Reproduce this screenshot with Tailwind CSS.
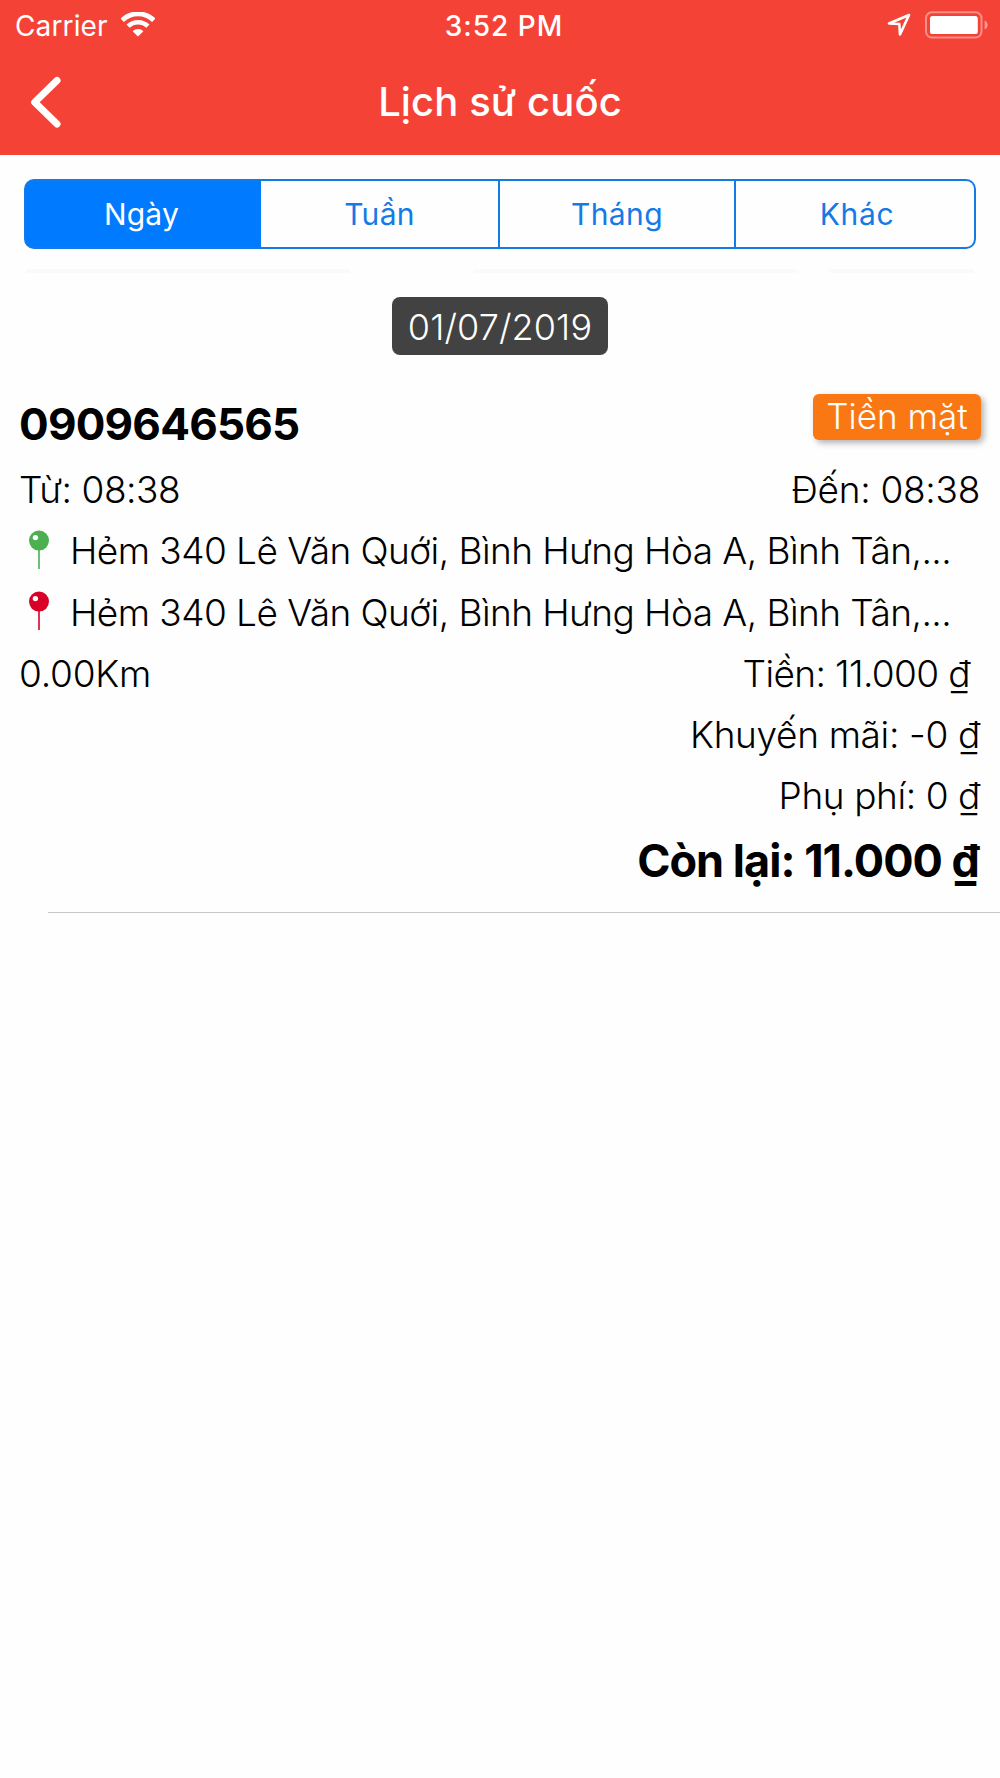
<!DOCTYPE html>
<html lang="vi">
<head>
  <meta charset="UTF-8">
  <meta name="viewport" content="width=device-width, initial-scale=1.0">
  <title>Lịch sử cuốc</title>
  <script src="https://cdn.jsdelivr.net/npm/@tailwindcss/browser@4"></script>
</head>
<body class="min-h-screen bg-[#fefefe] font-['Inter',sans-serif] text-black">
  <header class="h-[154.5px] bg-[#f44336] text-white">
    <!-- Status bar -->
    <div class="grid h-[51px] grid-cols-3 items-center pl-[15px] pr-[12px]">
      <div class="flex items-center gap-[13px]">
        <span class="text-[28px] tracking-[0.13px]">Carrier</span>
        <svg class="h-[25px] w-[34px] -translate-y-px" viewBox="0 0 34 25" fill="none" stroke="#fff">
          <path d="M1.3 8.2 A22.3 22.3 0 0 1 32.7 8.2" stroke-width="4.8"/>
          <path d="M7.1 14.2 A14.2 14.2 0 0 1 26.9 14.2" stroke-width="4.4"/>
          <path d="M11.6 19.2 A7.8 7.8 0 0 1 22.4 19.2 L17 24.6 Z" fill="#fff" stroke="none"/>
        </svg>
      </div>
      <span class="pl-[5px] text-center text-[28px] font-medium tracking-[1px]">3:52 PM</span>
      <div class="flex -translate-y-px items-center justify-end gap-[14px]">
        <svg class="h-[24px] w-[24px]" viewBox="0 0 24 24" fill="none" stroke="#fff" stroke-width="2.6" stroke-linejoin="round">
          <path d="M22 2 L2 10.5 L12.3 11 L13 21.5 Z"/>
        </svg>
        <svg class="h-[28px] w-[63px]" viewBox="0 0 63 28">
          <rect x="1" y="1.2" width="55.5" height="25.4" rx="6" fill="none" stroke="#fff" stroke-opacity=".4" stroke-width="2"/>
          <rect x="5" y="5" width="47.8" height="18" rx="2.6" fill="#fff"/>
          <path d="M59.6 9.4 A5 5 0 0 1 59.6 18.6 Z" fill="#fff" fill-opacity=".45"/>
        </svg>
      </div>
    </div>
    <!-- Nav bar -->
    <div class="grid h-[101px] grid-cols-[1fr_auto_1fr] items-center px-[30px]">
      <svg class="h-[52px] w-[31px]" viewBox="0 0 31 52" fill="none" stroke="#fff" stroke-width="7" stroke-linecap="round" stroke-linejoin="round">
        <path d="M27 4.4 L4.7 26.2 L27 48"/>
      </svg>
      <h1 class="text-[40px] font-medium tracking-[0.11px]">Lịch sử cuốc</h1>
    </div>
  </header>

  <main class="pt-[24.5px]">
    <div class="mx-6 flex h-[70px] rounded-[10px] border-2 border-[#147ae6] bg-[#007aff] text-[30px] text-[#147ae6]">
      <div class="flex w-[235px] items-center justify-center pr-[4px] tracking-[0.2px] text-white">Ngày</div>
      <div class="flex w-[239px] items-center justify-center border-r-2 border-[#147ae6] bg-[#fefefe] tracking-[0.3px]">Tuần</div>
      <div class="flex w-[236px] items-center justify-center border-r-2 border-[#147ae6] bg-[#fefefe] tracking-[0.4px]">Tháng</div>
      <div class="flex flex-1 items-center justify-center rounded-r-[8px] bg-[#fefefe] pl-[4px] tracking-[0.6px]">Khác</div>
    </div>

    <!-- Faint row of empty fields -->
    <div class="mx-[26px] mt-[20px] flex h-[4px]">
      <div class="w-[324px] rounded-full bg-[#fafafa]"></div>
      <div class="ml-[123px] w-[324px] rounded-full bg-[#fafafa]"></div>
      <div class="ml-[31px] flex-1 rounded-full bg-[#fafafa]"></div>
    </div>

    <div class="mx-auto mt-[24px] flex h-[58px] w-[216px] items-center justify-center rounded-[8px] bg-[#424242] pt-px text-[36px] font-[350] tracking-[0.1px] text-white">01/07/2019</div>

    <section class="mt-[35px] px-[19px] text-[37px] font-light leading-[61.25px] whitespace-nowrap">
      <div class="flex h-[69px] justify-between">
        <span class="text-[44px] font-bold leading-[68px] tracking-[-0.78px]">0909646565</span>
        <span class="mt-[4px] h-[46px] w-[168px] rounded-[6px] bg-[#fa7814] text-center text-[35px] font-[350] leading-[44px] text-white shadow-[3px_3px_6px_rgba(0,0,0,0.3)]">Tiền mặt</span>
      </div>
      <div class="flex justify-between">
        <span class="tracking-[-0.46px]">Từ: 08:38</span>
        <span class="pr-px tracking-[-0.28px]">Đến: 08:38</span>
      </div>
      <div class="flex items-center">
        <svg class="mr-[20px] ml-[9px] h-[40px] w-[22px] -translate-y-px" viewBox="0 0 22 40">
          <path d="M11 18V39" stroke="#4caf50" stroke-width="1.6"/>
          <circle cx="11" cy="10.6" r="10" fill="#4caf50"/>
          <circle cx="7.4" cy="7.6" r="2.7" fill="#fff"/>
        </svg>
        <span class="tracking-[-0.55px]">Hẻm 340 Lê Văn Quới, Bình Hưng Hòa A, Bình Tân,...</span>
      </div>
      <div class="flex items-center">
        <svg class="mr-[20px] ml-[9px] h-[40px] w-[22px] -translate-y-px" viewBox="0 0 22 40">
          <path d="M11 18V39" stroke="#d80027" stroke-width="1.6"/>
          <circle cx="11" cy="10.6" r="10" fill="#d80027"/>
          <circle cx="7.4" cy="7.6" r="2.7" fill="#fff"/>
        </svg>
        <span class="tracking-[-0.55px]">Hẻm 340 Lê Văn Quới, Bình Hưng Hòa A, Bình Tân,...</span>
      </div>
      <div class="flex justify-between">
        <span class="tracking-[-0.21px]">0.00Km</span>
        <span class="pr-[11px] tracking-[-0.62px]">Tiền: 11.000 ₫</span>
      </div>
      <div class="pr-[1px] text-right tracking-[-0.34px]">Khuyến mãi: -0 ₫</div>
      <div class="pr-[1px] text-right tracking-[-0.41px]">Phụ phí: 0 ₫</div>
      <div class="pr-[2px] text-right text-[45px] font-bold leading-[68px] tracking-[-0.97px]">Còn lại: 11.000 ₫</div>
    </section>
    <div class="ml-[48px] mt-[17.75px] h-px bg-[#c8c7cc]"></div>
  </main>
</body>
</html>
